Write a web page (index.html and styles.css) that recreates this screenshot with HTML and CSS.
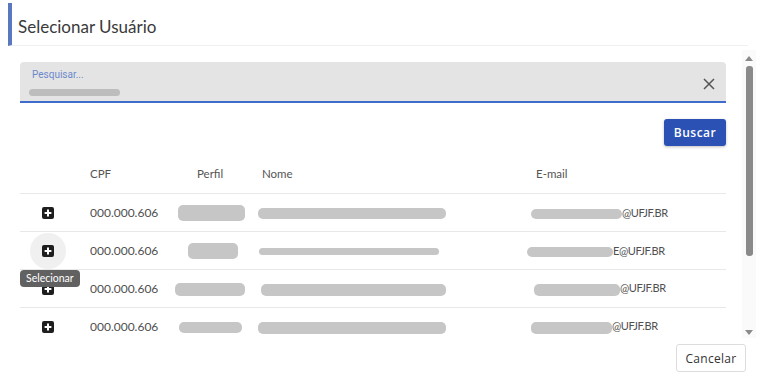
FILE: index.html
```html
<!DOCTYPE html>
<html lang="pt-BR">
<head>
    <meta charset="UTF-8">
    <meta name="viewport" content="width=device-width, initial-scale=1.0">
    <title>Selecionar Usuário</title>
    <link rel="stylesheet" href="styles.css">
</head>
<body>
    <div class="dialog">
        <header class="dialog-title">
            <h2>Selecionar Usuário</h2>
        </header>

        <div class="dialog-body">
            <div class="scroll-content">
                <div class="search-field">
                    <div class="search-input">
                        <label>Pesquisar...</label>
                        <span class="blur blur-search"></span>
                    </div>
                    <svg class="clear-icon" width="14" height="14" viewBox="0 0 14 14">
                        <path d="M2 2 L12 12 M12 2 L2 12" stroke="#555" stroke-width="1.5" fill="none"/>
                    </svg>
                </div>

                <div class="actions">
                    <button class="btn-primary">Buscar</button>
                </div>

                <table class="users">
                    <thead>
                        <tr>
                            <th class="col-add"></th>
                            <th class="col-cpf">CPF</th>
                            <th class="col-perfil">Perfil</th>
                            <th class="col-nome">Nome</th>
                            <th class="col-email">E-mail</th>
                        </tr>
                    </thead>
                    <tbody>
                        <tr>
                            <td class="col-add"><span class="add-btn"><svg width="12" height="12" viewBox="0 0 12 12"><rect width="12" height="12" rx="2" fill="#1e1e1e"/><path d="M6 2.6 V9.4 M2.6 6 H9.4" stroke="#fff" stroke-width="2"/></svg></span></td>
                            <td class="col-cpf">000.000.606</td>
                            <td class="col-perfil"><span class="blur tall p1"></span></td>
                            <td class="col-nome"><span class="blur n1"></span></td>
                            <td class="col-email"><span class="blur e1"></span>@UFJF.BR</td>
                        </tr>
                        <tr>
                            <td class="col-add">
                                <span class="add-btn hovered"><svg width="12" height="12" viewBox="0 0 12 12"><rect width="12" height="12" rx="2" fill="#1e1e1e"/><path d="M6 2.6 V9.4 M2.6 6 H9.4" stroke="#fff" stroke-width="2"/></svg></span>
                                <span class="tooltip">Selecionar</span>
                            </td>
                            <td class="col-cpf">000.000.606</td>
                            <td class="col-perfil"><span class="blur tall p2"></span></td>
                            <td class="col-nome"><span class="blur thin n2"></span></td>
                            <td class="col-email"><span class="blur e2"></span>E@UFJF.BR</td>
                        </tr>
                        <tr>
                            <td class="col-add"><span class="add-btn"><svg width="12" height="12" viewBox="0 0 12 12"><rect width="12" height="12" rx="2" fill="#1e1e1e"/><path d="M6 2.6 V9.4 M2.6 6 H9.4" stroke="#fff" stroke-width="2"/></svg></span></td>
                            <td class="col-cpf">000.000.606</td>
                            <td class="col-perfil"><span class="blur p3"></span></td>
                            <td class="col-nome"><span class="blur n3"></span></td>
                            <td class="col-email"><span class="blur e3"></span>@UFJF.BR</td>
                        </tr>
                        <tr>
                            <td class="col-add"><span class="add-btn"><svg width="12" height="12" viewBox="0 0 12 12"><rect width="12" height="12" rx="2" fill="#1e1e1e"/><path d="M6 2.6 V9.4 M2.6 6 H9.4" stroke="#fff" stroke-width="2"/></svg></span></td>
                            <td class="col-cpf">000.000.606</td>
                            <td class="col-perfil"><span class="blur p4"></span></td>
                            <td class="col-nome"><span class="blur n4"></span></td>
                            <td class="col-email"><span class="blur e4"></span>@UFJF.BR</td>
                        </tr>
                    </tbody>
                </table>
            </div>

            <div class="scrollbar">
                <span class="arrow-up"></span>
                <span class="thumb"></span>
                <span class="arrow-down"></span>
            </div>
        </div>

        <footer class="dialog-footer">
            <button class="btn-default">Cancelar</button>
        </footer>
    </div>
</body>
</html>
```

FILE: styles.css
```css
body {
    margin: 0;
    padding: 0;
    background: #fff;
    font-family: Lato, "Open Sans", sans-serif;
    color: #4f4f4f;
}

.dialog {
    width: 763px;
    height: 375px;
    overflow: hidden;
    padding: 3px 7px 0 8px;
    box-sizing: border-box;
}

.dialog-title {
    height: 42px;
    border-left: 4px solid #5a78bd;
    border-bottom: 1px solid #f0f0f0;
    margin-right: 8px;
    display: flex;
    align-items: center;
    padding-left: 6px;
}

.dialog-title h2 {
    margin: 0;
    font-size: 17px;
    font-weight: 400;
    color: #3a3a3a;
    padding-top: 4px;
}

.dialog-body {
    margin-top: 4px;
    height: 288px;
    display: flex;
    overflow: hidden;
}

.scroll-content {
    flex: 1;
    padding: 12px 16px 0 12px;
}

.search-field {
    height: 39px;
    background: #e4e4e4;
    border-bottom: 2px solid #3f6ccc;
    border-radius: 4px 4px 0 0;
    display: flex;
    align-items: center;
    padding: 0 10px 0 12px;
}

.search-input {
    flex: 1;
    display: flex;
    flex-direction: column;
    padding-top: 1px;
}

.search-input label {
    font-size: 10px;
    color: #6d88cc;
    font-family: Roboto, sans-serif;
    line-height: 12px;
}

.clear-icon {
    margin-top: 4px;
}

.blur {
    display: inline-block;
    background: #c6c6c6;
    border-radius: 5px;
    height: 11px;
    vertical-align: middle;
}

.blur-search {
    width: 91px;
    height: 7px;
    margin: 8px 0 0 -3px;
    border-radius: 4px;
    background: #bdbdbd;
}

.blur.tall {
    height: 16px;
}

.blur.thin {
    height: 7px;
}

.p1 { width: 67px; margin-left: -19px; }
.p2 { width: 50px; margin-left: -9px; }
.p3 { width: 70px; height: 13px; margin-left: -22px; }
.p4 { width: 63px; height: 11px; margin-left: -18px; }

.n1 { width: 188px; margin-left: -4px; }
.n2 { width: 180px; margin-left: -3px; }
.n3 { width: 185px; height: 12px; margin-left: -1px; }
.n4 { width: 188px; height: 12px; margin-left: -4px; }

.e1 { width: 91px; height: 10px; margin-left: -5px; }
.e2 { width: 86px; height: 10px; margin-left: -9px; }
.e3 { width: 86px; height: 12px; margin-left: -2px; }
.e4 { width: 81px; height: 12px; margin-left: -5px; }

.actions {
    display: flex;
    justify-content: flex-end;
    margin-top: 16px;
}

.btn-primary {
    width: 62px;
    height: 27px;
    background: #2b51b4;
    color: #fff;
    border: none;
    border-radius: 3px;
    font-family: "Open Sans", sans-serif;
    font-weight: 600;
    font-size: 12px;
    letter-spacing: 0.5px;
    box-shadow: 0 1px 3px rgba(0, 0, 0, 0.25);
    cursor: pointer;
}

.users {
    width: 100%;
    border-collapse: collapse;
    margin-top: 8px;
    font-size: 12px;
}

.users th {
    height: 39px;
    font-weight: 400;
    font-size: 11.5px;
    color: #555;
    text-align: left;
    border-bottom: 1px solid #e8e8e8;
    padding: 0;
}

.users td {
    height: 37px;
    padding: 0;
    border-bottom: 1px solid #e8e8e8;
    white-space: nowrap;
}

.col-add {
    width: 70px;
    position: relative;
}

.col-cpf {
    width: 88px;
}

.users th.col-perfil {
    width: 65px;
    padding-left: 19px;
}

.users td.col-perfil {
    padding-left: 19px;
}

.col-nome {
    width: 274px;
}

.users td.col-email {
    font-size: 11px;
    letter-spacing: -0.4px;
}

.add-btn {
    width: 36px;
    height: 36px;
    margin-left: 10px;
    border-radius: 50%;
    display: flex;
    align-items: center;
    justify-content: center;
}

.add-btn.hovered {
    background: #f0f0f0;
}

.tooltip {
    position: absolute;
    left: 0;
    top: 38px;
    background: #616161;
    color: #fff;
    font-size: 10.5px;
    padding: 2px 6px 3px;
    border-radius: 4px;
    z-index: 2;
}

.scrollbar {
    width: 14px;
    background: #fafafa;
    display: flex;
    flex-direction: column;
    align-items: center;
    padding-top: 6px;
    box-sizing: border-box;
}

.arrow-up {
    width: 0;
    height: 0;
    border-left: 4px solid transparent;
    border-right: 4px solid transparent;
    border-bottom: 5px solid #8a8a8a;
}

.thumb {
    width: 7px;
    height: 190px;
    margin-top: 5px;
    background: #8a8a8a;
    border-radius: 3px;
}

.arrow-down {
    margin-top: 74px;
    width: 0;
    height: 0;
    border-left: 4px solid transparent;
    border-right: 4px solid transparent;
    border-top: 5px solid #8a8a8a;
}

.dialog-footer {
    display: flex;
    justify-content: flex-end;
    padding: 6px 10px 0 0;
}

.btn-default {
    width: 70px;
    height: 28px;
    background: #fff;
    border: 1px solid #dcdcdc;
    border-radius: 3px;
    font-family: "Open Sans", sans-serif;
    font-size: 12px;
    color: #333;
    letter-spacing: 0.3px;
}
```
